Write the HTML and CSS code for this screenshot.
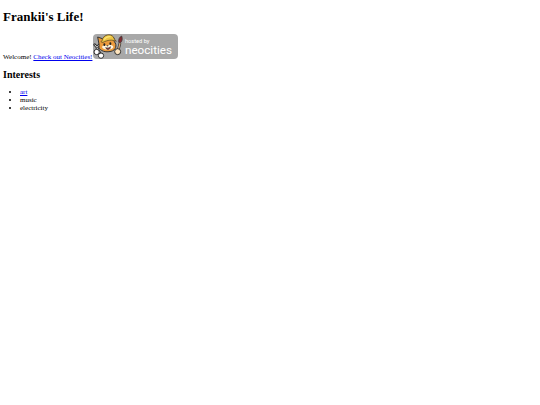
FILE: index.html
```html
<!DOCTYPE html>
<html lang="en">
<head>
    <meta charset="UTF-8">
    <meta name="viewport" content="width=device-width, initial-scale=1.0">
    <title>Frankii's Life!</title>
    <link rel="stylesheet" href="styles.css">
</head>
<body>
    <h1>Frankii's Life!</h1>
    <p>Welcome! <a href="https://neocities.org">Check out Neocities!</a><svg class="badge" viewBox="0 0 255 75" role="img" aria-label="Hosted by Neocities">
            <rect width="255" height="75" rx="12" fill="#a8a8a8"/>
            <!-- wrench and paintbrush -->
            <path d="M5 32l7 8 6-7M12 42l10 18" fill="none" stroke="#333" stroke-width="8" stroke-linecap="round"/>
            <path d="M5 32l7 8 6-7M12 42l10 18" fill="none" stroke="#ddd" stroke-width="3"/>
            <path d="M81 27l-5 20" stroke="#333" stroke-width="8"/>
            <path d="M81 27l-5 20" stroke="#d8a878" stroke-width="4"/>
            <path d="M77 25c-1-9 2-16 9-19 3 8 2 15-3 20z" fill="#822c31" stroke="#333" stroke-width="2"/>
            <!-- cat -->
            <path d="M18 30L14 9l14 5C42 0 57 2 63 13l1 10c9 10 5 26-10 29-16 4-33-1-36-12z" fill="#ec9b3d" stroke="#333" stroke-width="3" stroke-linejoin="round"/>
            <path d="M27 39c2-6 10-7 14-3 7-7 19-4 20 3 0 9-30 13-34 0z" fill="#fff4df"/>
            <path d="M27 20c3-21 33-24 37-5l6 7c-13-6-26-4-40 3-6 1-7-2-3-5z" fill="#edc444" stroke="#4a3a20" stroke-width="2"/>
            <path d="M33 17c5-7 12-10 20-9" fill="none" stroke="#fae575" stroke-width="4"/>
            <ellipse cx="34" cy="32" rx="3" ry="4" fill="#222"/>
            <ellipse cx="52" cy="29" rx="3" ry="4" fill="#222"/>
            <path d="M38 41c6 2 11 1 14-3 1 9-10 12-14 3z" fill="#a83430" stroke="#333" stroke-width="2"/>
            <path d="M41 34h6l-3 4z" fill="#333"/>
            <!-- paws -->
            <circle cx="11" cy="54" r="8" fill="#fff" stroke="#333" stroke-width="3"/>
            <circle cx="24" cy="65" r="8" fill="#fff" stroke="#333" stroke-width="3"/>
            <circle cx="74" cy="53" r="9" fill="#ffe5be" stroke="#333" stroke-width="3"/>
            <text class="badge-small" x="96" y="28">hosted by</text>
            <text class="badge-name" x="96" y="61">neocities</text>
        </svg></p>
    <h2>Interests</h2>
    <ul>
        <li><a href="art.html">art</a></li>
        <li>music</li>
        <li>electricity</li>
    </ul>
</body>
</html>
```
FILE: styles.css
```css
body {
    font-family: "Liberation Serif", "Times New Roman", serif;
    font-size: 7px;
    line-height: 8px;
    color: #000;
    background: #fff;
    margin: 9px 3px;
}

h1 {
    font-size: 13px;
    line-height: 16px;
    margin: 0 0 9px;
}

h2 {
    font-size: 10px;
    line-height: 12px;
    margin: 8px 0 7px;
}

p {
    margin: 0;
}

a {
    color: #0000ee;
}

ul {
    margin: 0;
    padding-left: 17px;
}

.badge {
    width: 85px;
    height: 25px;
    margin-left: 1px;
    vertical-align: baseline;
}

.badge text {
    font-family: Roboto, sans-serif;
    fill: #fff;
}

.badge-small {
    font-size: 17px;
}

.badge-name {
    font-size: 35px;
}
```
